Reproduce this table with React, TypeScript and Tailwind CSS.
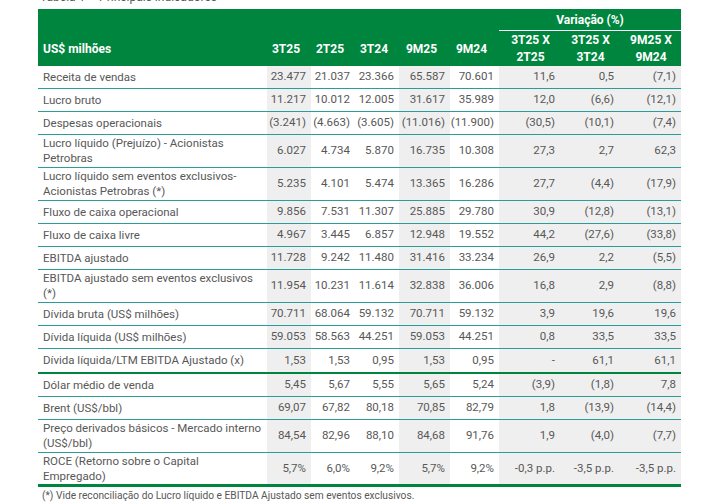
import React from "react";

type Row = { label: React.ReactNode; v: string[]; tall?: boolean; border?: "teal" | "green" | "greenBottom" };

const rows: Row[] = [
  { label: "Receita de vendas", v: ["23.477", "21.037", "23.366", "65.587", "70.601", "11,6", "0,5", "(7,1)"] },
  { label: "Lucro bruto", v: ["11.217", "10.012", "12.005", "31.617", "35.989", "12,0", "(6,6)", "(12,1)"] },
  { label: "Despesas operacionais", v: ["(3.241)", "(4.663)", "(3.605)", "(11.016)", "(11.900)", "(30,5)", "(10,1)", "(7,4)"] },
  { label: <>Lucro líquido (Prejuízo) - Acionistas<br />Petrobras</>, v: ["6.027", "4.734", "5.870", "16.735", "10.308", "27,3", "2,7", "62,3"], tall: true },
  { label: <>Lucro líquido sem eventos exclusivos-<br />Acionistas Petrobras (*)</>, v: ["5.235", "4.101", "5.474", "13.365", "16.286", "27,7", "(4,4)", "(17,9)"], tall: true },
  { label: "Fluxo de caixa operacional", v: ["9.856", "7.531", "11.307", "25.885", "29.780", "30,9", "(12,8)", "(13,1)"] },
  { label: "Fluxo de caixa livre", v: ["4.967", "3.445", "6.857", "12.948", "19.552", "44,2", "(27,6)", "(33,8)"] },
  { label: "EBITDA ajustado", v: ["11.728", "9.242", "11.480", "31.416", "33.234", "26,9", "2,2", "(5,5)"] },
  { label: <>EBITDA ajustado sem eventos exclusivos<br />(*)</>, v: ["11.954", "10.231", "11.614", "32.838", "36.006", "16,8", "2,9", "(8,8)"], tall: true },
  { label: "Dívida bruta (US$ milhões)", v: ["70.711", "68.064", "59.132", "70.711", "59.132", "3,9", "19,6", "19,6"] },
  { label: "Dívida líquida (US$ milhões)", v: ["59.053", "58.563", "44.251", "59.053", "44.251", "0,8", "33,5", "33,5"] },
  { label: "Dívida líquida/LTM EBITDA Ajustado (x)", v: ["1,53", "1,53", "0,95", "1,53", "0,95", "-", "61,1", "61,1"], border: "green" },
  { label: "Dólar médio de venda", v: ["5,45", "5,67", "5,55", "5,65", "5,24", "(3,9)", "(1,8)", "7,8"] },
  { label: "Brent (US$/bbl)", v: ["69,07", "67,82", "80,18", "70,85", "82,79", "1,8", "(13,9)", "(14,4)"] },
  { label: <>Preço derivados básicos - Mercado interno<br />(US$/bbl)</>, v: ["84,54", "82,96", "88,10", "84,68", "91,76", "1,9", "(4,0)", "(7,7)"], tall: true },
  { label: <>ROCE (Retorno sobre o Capital<br />Empregado)</>, v: ["5,7%", "6,0%", "9,2%", "5,7%", "9,2%", "-0,3 p.p.", "-3,5 p.p.", "-3,5 p.p."], tall: true, border: "greenBottom" },
];

const shaded = [true, false, false, true, false, true, true, true];
const grid = "grid grid-cols-[229px_44px_44px_44px_51px_49px_61px_59px_62px]";

function DataRow({ r }: { r: Row }) {
  const h =
    r.border === "green"
      ? "h-[25px] border-b-2 border-[#00853e]"
      : r.border === "greenBottom"
      ? (r.tall ? "h-[34px]" : "h-[24px]") + " border-b-[3px] border-[#00853e]"
      : (r.tall ? "h-[33px]" : "h-[23px]") + " border-b border-[#2c9c9a]";
  return (
    <div className={`${grid} ${h}`}>
      <div className="flex items-center pl-[5px] leading-[15px] whitespace-nowrap">{r.label}</div>
      {r.v.map((x, i) => (
        <div
          key={i}
          className={`flex items-center justify-end pr-[5px] whitespace-nowrap ${shaded[i] ? "bg-[#efefef]" : ""}`}
        >
          {x}
        </div>
      ))}
    </div>
  );
}

export default function App() {
  return (
    <div className="w-[717px] h-[504px] overflow-hidden bg-white font-['Roboto',sans-serif] text-[11.5px] text-[#585858]">
      <div className="pl-[38px] w-[681px]">
        <div className="-mt-[10px] h-[14px] leading-[14px] pl-[2px] mb-[5px] text-[12px]">
          Tabela 1 – Principais indicadores
        </div>
        <div className="bg-[#00853e] text-white font-bold text-[12px]">
          <div className={`${grid} h-[22px]`}>
            <div className="col-span-6" />
            <div className="col-span-3 flex items-center justify-center border-b border-white">Variação (%)</div>
          </div>
          <div className={`${grid} h-[35px]`}>
            <div className="flex items-center pl-[5px]">US$ milhões</div>
            {["3T25", "2T25", "3T24", "9M25", "9M24"].map((t) => (
              <div key={t} className="flex items-center justify-center pr-[6px]">{t}</div>
            ))}
            {[
              ["3T25 X", "2T25"],
              ["3T25 X", "3T24"],
              ["9M25 X", "9M24"],
            ].map((t, i) => (
              <div key={i} className="flex flex-col items-center justify-center leading-[17px] pl-[2px]">
                <span>{t[0]}</span>
                <span>{t[1]}</span>
              </div>
            ))}
          </div>
        </div>
        {rows.map((r, i) => (
          <DataRow key={i} r={r} />
        ))}
        <div className="pl-[4px] pt-[2px] text-[10.2px] leading-[13px]">
          (*) Vide reconciliação do Lucro líquido e EBITDA Ajustado sem eventos exclusivos.
        </div>
      </div>
    </div>
  );
}
